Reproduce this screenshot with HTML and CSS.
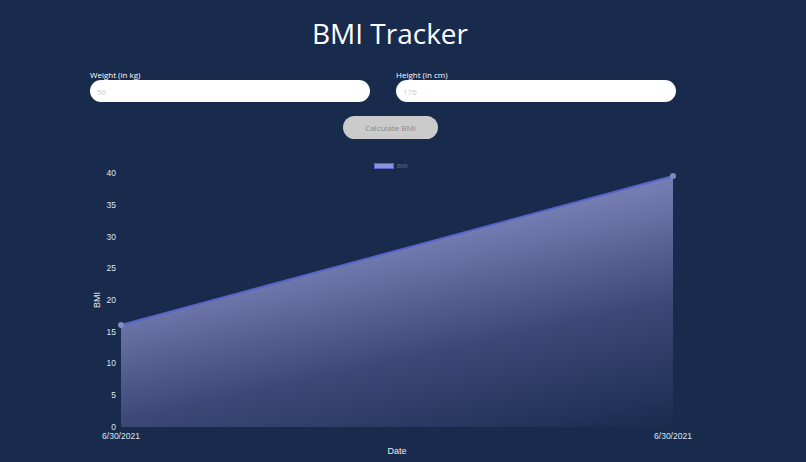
FILE: index.html
```html
<!DOCTYPE html>
<html>
<head>
<meta charset="utf-8">
<link rel="stylesheet" href="styles.css">
</head>
<body>
<div class="page">
  <h1 class="title">BMI Tracker</h1>
  <div class="form-row">
    <div class="field">
      <label class="label">Weight (in kg)</label>
      <input class="input" type="text" placeholder="50">
    </div>
    <div class="field">
      <label class="label">Height (in cm)</label>
      <input class="input" type="text" placeholder="176">
    </div>
  </div>
  <div class="actions">
    <button class="btn">Calculate BMI</button>
  </div>
  <svg class="chart" width="806" height="312" viewBox="0 150 806 312" xmlns="http://www.w3.org/2000/svg">
    <defs>
      <linearGradient id="fillGrad" x1="121" y1="176" x2="198" y2="530" gradientUnits="userSpaceOnUse">
        <stop offset="0" stop-color="#8a92c8"/>
        <stop offset="0.35" stop-color="#737cb1"/>
        <stop offset="0.66" stop-color="#3c4978"/>
        <stop offset="1" stop-color="#1a2b4e"/>
      </linearGradient>
    </defs>
    <rect class="legend-box" x="374.5" y="163.5" width="19" height="5"/>
    <text class="legend-text" x="397" y="168">BMI</text>
    <g class="tick">
      <text x="116" y="176" text-anchor="end">40</text>
      <text x="116" y="208" text-anchor="end">35</text>
      <text x="116" y="240" text-anchor="end">30</text>
      <text x="116" y="271" text-anchor="end">25</text>
      <text x="116" y="303" text-anchor="end">20</text>
      <text x="116" y="335" text-anchor="end">15</text>
      <text x="116" y="366" text-anchor="end">10</text>
      <text x="116" y="398" text-anchor="end">5</text>
      <text x="116" y="430" text-anchor="end">0</text>
      <text x="121" y="439" text-anchor="middle">6/30/2021</text>
      <text x="673" y="439" text-anchor="middle">6/30/2021</text>
    </g>
    <text class="axis-title" x="397" y="454" text-anchor="middle">Date</text>
    <text class="axis-title" transform="translate(100 300) rotate(-90)" text-anchor="middle">BMI</text>
    <polygon points="121,325 673,176 673,427 121,427" fill="url(#fillGrad)"/>
    <line x1="121" y1="325" x2="673" y2="176" class="line"/>
    <circle cx="121" cy="325" r="3" class="pt"/>
    <circle cx="673" cy="176" r="3" class="pt"/>
  </svg>
</div>
</body>
</html>
```
FILE: styles.css
```css
html, body {
  margin: 0;
  padding: 0;
  background: #182b4d;
}
.page {
  width: 806px;
  height: 462px;
  overflow: hidden;
  display: flex;
  flex-direction: column;
}
.title {
  margin: 12px 0 0;
  align-self: center;
  transform: translateX(-13px);
  font-family: "Open Sans", "Noto Sans", sans-serif;
  font-weight: 400;
  font-size: 28px;
  line-height: 42px;
  color: #ffffff;
}
.form-row {
  margin: 16px 0 0 90px;
  display: flex;
  gap: 26px;
}
.field {
  display: flex;
  flex-direction: column;
  width: 280px;
}
.label {
  font-family: "Open Sans", "Liberation Sans", sans-serif;
  font-size: 8px;
  line-height: 10px;
  color: #ffffff;
}
.input {
  box-sizing: border-box;
  height: 22px;
  width: 280px;
  border: none;
  border-radius: 11px;
  background: #ffffff;
  padding: 0 7px;
  font-family: "Open Sans", sans-serif;
  font-size: 8px;
  outline: none;
}
.input::placeholder {
  color: #c8c8c8;
}
.actions {
  margin: 14px 0 0 343px;
  display: flex;
}
.btn {
  width: 95px;
  height: 23px;
  border: none;
  border-radius: 12px;
  background: #cbcbcb;
  color: #888888;
  font-family: "Open Sans", sans-serif;
  font-size: 8px;
  padding: 0;
}
.chart {
  display: block;
  margin-top: 11px;
  flex: none;
}
.legend-box {
  fill: #8a93de;
  stroke: #5b63c6;
  stroke-width: 1;
}
.legend-text {
  font-family: "Liberation Sans", Arial, sans-serif;
  font-size: 6px;
  fill: #5d6785;
}
.tick text {
  font-family: "Liberation Sans", Arial, sans-serif;
  font-size: 8.5px;
  fill: #dfe3ec;
}
.axis-title {
  font-family: "Liberation Sans", Arial, sans-serif;
  font-size: 9px;
  fill: #e6e9f0;
}
.line {
  stroke: #5963c9;
  stroke-width: 2;
}
.pt {
  fill: #7f8ac2;
}
```
